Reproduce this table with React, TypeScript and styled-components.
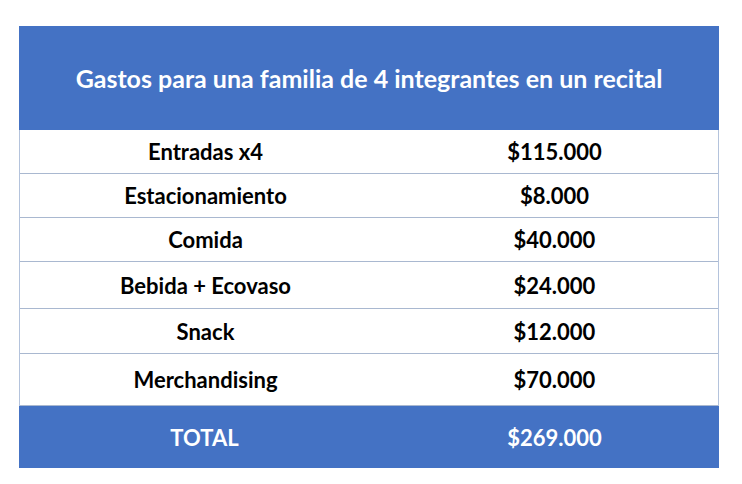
import * as React from 'react';
import styled, { createGlobalStyle } from 'styled-components';

const GlobalStyle = createGlobalStyle`
  html, body {
    margin: 0;
    padding: 0;
    background: #fff;
  }
  body {
    font-family: Lato, "Open Sans", "Liberation Sans", sans-serif;
  }
`;

const Page = styled.div`
  width: 742px;
  height: 484px;
  padding: 26px 0 0 19px;
  box-sizing: border-box;
`;

const Table = styled.div`
  width: 700px;
  display: flex;
  flex-direction: column;
  border-left: 1px solid #b4c3dc;
  border-right: 1px solid #b4c3dc;
  box-sizing: border-box;
`;

const Title = styled.div`
  height: 104px;
  background: #4472c4;
  color: #fff;
  font-weight: 700;
  font-size: 25px;
  display: flex;
  align-items: center;
  justify-content: center;
  margin: 0 -1px;
`;

const Row = styled.div<{ h: number; total?: boolean }>`
  height: ${p => p.h}px;
  display: grid;
  grid-template-columns: 371px 1fr;
  align-items: center;
  box-sizing: border-box;
  font-weight: 700;
  font-size: 22px;
  color: ${p => (p.total ? '#fff' : '#000')};
  background: ${p => (p.total ? '#4472c4' : '#fff')};
  border-bottom: ${p => (p.total ? 'none' : '1px solid #a9b8d0')};
  margin: ${p => (p.total ? '0 -1px' : '0')};
`;

const Cell = styled.div`
  text-align: center;
`;

const rows = [
  { label: 'Entradas x4', value: '$115.000', h: 44 },
  { label: 'Estacionamiento', value: '$8.000', h: 44 },
  { label: 'Comida', value: '$40.000', h: 44 },
  { label: 'Bebida + Ecovaso', value: '$24.000', h: 47 },
  { label: 'Snack', value: '$12.000', h: 45 },
  { label: 'Merchandising', value: '$70.000', h: 52 },
];

export default function App() {
  return (
    <Page>
      <GlobalStyle />
      <Table>
        <Title>Gastos para una familia de 4 integrantes en un recital</Title>
        {rows.map(r => (
          <Row key={r.label} h={r.h}>
            <Cell>{r.label}</Cell>
            <Cell>{r.value}</Cell>
          </Row>
        ))}
        <Row h={62} total>
          <Cell>TOTAL</Cell>
          <Cell>$269.000</Cell>
        </Row>
      </Table>
    </Page>
  );
}
